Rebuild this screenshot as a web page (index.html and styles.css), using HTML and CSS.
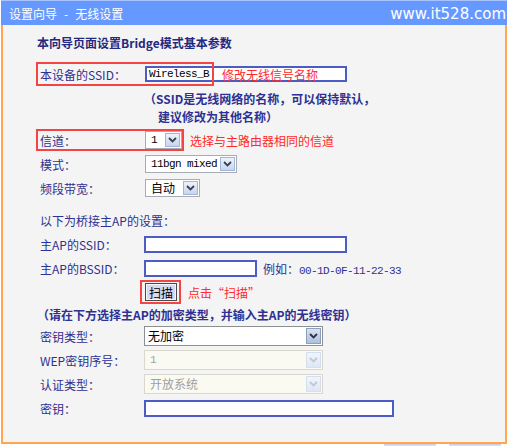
FILE: index.html
```html
<!DOCTYPE html>
<html lang="zh-CN">
<head>
    <meta charset="UTF-8">
    <title>设置向导 - 无线设置</title>
    <link rel="stylesheet" href="styles.css">
</head>
<body>
    <div class="page">
        <div class="titlebar">
            <span class="title">设置向导<span class="dash">-</span>无线设置</span>
            <span class="site">www.it528.com</span>
        </div>

        <div class="panel">
            <p class="intro">本向导页面设置Bridge模式基本参数</p>

            <div class="row">
                <span class="mark mark-ssid"></span>
                <span class="lbl">本设备的SSID：</span>
                <div class="input input-ssid">
                    <span class="mono">Wireless_B</span>
                    <span class="tip tip-ssid">修改无线信号名称</span>
                </div>
            </div>

            <div class="note">
                <div class="note-line">（SSID是无线网络的名称，可以保持默认，</div>
                <div class="note-line note-indent">建议修改为其他名称）</div>
            </div>

            <div class="row">
                <span class="mark mark-chan"></span>
                <span class="lbl">信道：</span>
                <div class="sel sel-chan">
                    <span class="val mono">1</span>
                    <span class="arr"><svg width="9" height="6" viewBox="0 0 9 6"><path d="M1 1L4.5 4.5L8 1" fill="none" stroke="#3b4150" stroke-width="1.8"/></svg></span>
                </div>
                <span class="tip tip-chan">选择与主路由器相同的信道</span>
            </div>

            <div class="row">
                <span class="lbl">模式：</span>
                <div class="sel sel-mode">
                    <span class="val mono">11bgn mixed</span>
                    <span class="arr"><svg width="9" height="6" viewBox="0 0 9 6"><path d="M1 1L4.5 4.5L8 1" fill="none" stroke="#3b4150" stroke-width="1.8"/></svg></span>
                </div>
            </div>

            <div class="row">
                <span class="lbl">频段带宽：</span>
                <div class="sel sel-band">
                    <span class="val">自动</span>
                    <span class="arr"><svg width="9" height="6" viewBox="0 0 9 6"><path d="M1 1L4.5 4.5L8 1" fill="none" stroke="#3b4150" stroke-width="1.8"/></svg></span>
                </div>
            </div>

            <div class="row row-gap">
                <span class="lbl lbl-wide">以下为桥接主AP的设置：</span>
            </div>

            <div class="row">
                <span class="lbl">主AP的SSID：</span>
                <div class="input input-apssid"></div>
            </div>

            <div class="row">
                <span class="lbl">主AP的BSSID：</span>
                <div class="input input-bssid"></div>
                <span class="example">例如：<span class="mono mono-navy">00-1D-0F-11-22-33</span></span>
            </div>

            <div class="row">
                <span class="mark mark-scan"></span>
                <span class="lbl"></span>
                <button class="scan">扫描</button>
                <span class="tip tip-scan">点击“扫描”</span>
            </div>

            <div class="row row-note">
                <span class="enc-note">（请在下方选择主AP的加密类型，并输入主AP的无线密钥）</span>
            </div>

            <div class="row">
                <span class="lbl">密钥类型：</span>
                <div class="sel sel-key">
                    <span class="val">无加密</span>
                    <span class="arr arr-dark"><svg width="9" height="6" viewBox="0 0 9 6"><path d="M1 1L4.5 4.5L8 1" fill="none" stroke="#2c3240" stroke-width="1.8"/></svg></span>
                </div>
            </div>

            <div class="row">
                <span class="lbl">WEP密钥序号：</span>
                <div class="sel sel-key sel-off">
                    <span class="val mono">1</span>
                    <span class="arr"><svg width="9" height="6" viewBox="0 0 9 6"><path d="M1 1L4.5 4.5L8 1" fill="none" stroke="#c4c8ce" stroke-width="1.8"/></svg></span>
                </div>
            </div>

            <div class="row">
                <span class="lbl">认证类型：</span>
                <div class="sel sel-key sel-off">
                    <span class="val">开放系统</span>
                    <span class="arr"><svg width="9" height="6" viewBox="0 0 9 6"><path d="M1 1L4.5 4.5L8 1" fill="none" stroke="#c4c8ce" stroke-width="1.8"/></svg></span>
                </div>
            </div>

            <div class="row">
                <span class="lbl">密钥：</span>
                <div class="input input-key"></div>
            </div>
        </div>

        <div class="footer">
            <span class="fbtn"></span>
            <span class="fbtn"></span>
        </div>
    </div>
</body>
</html>
```

FILE: styles.css
```css
body {
    margin: 0;
    background-color: #fff;
    font-family: "Noto Sans CJK SC", sans-serif;
    font-size: 12px;
    color: #2e3192;
}

.page {
    width: 506px;
    margin-left: 1px;
}

.titlebar {
    height: 25px;
    box-sizing: border-box;
    background-color: #6699ff;
    border-top: 1px solid #a9c3ff;
    display: flex;
    justify-content: space-between;
    align-items: center;
    padding: 0 1px 0 8px;
    color: #fff;
}

.title {
    font-size: 12px;
}

.dash {
    margin: 0 7px 0 7px;
}

.site {
    font-family: "DejaVu Sans", sans-serif;
    font-size: 15px;
    margin-top: 1px;
}

.panel {
    background-color: #f4f4f4;
    border: 2px solid #ffa64f;
    border-top: 0;
    padding: 9px 0 22px 37px;
}

.intro {
    margin: 0 0 10px -3px;
    height: 18px;
    line-height: 18px;
    font-size: 12px;
    font-weight: bold;
    color: #26287f;
}

.row {
    position: relative;
    display: flex;
    align-items: center;
    height: 24px;
}

.row-gap {
    margin-top: 8px;
}

.row-note {
    height: 20px;
}

.lbl {
    width: 104px;
    flex: none;
}

.lbl-wide {
    width: auto;
}

.mono {
    font-family: "Liberation Mono", monospace;
    font-size: 11px;
    letter-spacing: -0.6px;
    color: #000;
}

.mono-navy {
    color: #2e3192;
}

/* red annotation frames */
.mark {
    position: absolute;
    box-sizing: border-box;
    border: 2px solid #f44444;
}

.mark-ssid {
    left: -4px;
    top: 0;
    width: 178px;
    height: 24px;
}

.mark-chan {
    left: -4px;
    top: 1px;
    width: 148px;
    height: 22px;
}

.mark-scan {
    left: 100px;
    top: 0;
    width: 41px;
    height: 24px;
}

.tip {
    color: #ff2a2a;
    white-space: nowrap;
}

.tip-ssid {
    margin-left: 13px;
}

.tip-chan {
    margin-left: 8px;
}

.tip-scan {
    margin-left: 11px;
}

.input {
    box-sizing: border-box;
    height: 17px;
    border: 2px solid #4b5cc4;
    background-color: #fff;
}

.input-ssid {
    width: 202px;
    height: 16px;
    margin-left: 1px;
    display: flex;
    align-items: center;
    padding-left: 2px;
}

.input-apssid {
    width: 203px;
}

.input-bssid {
    width: 113px;
}

.input-key {
    width: 250px;
}

.example {
    margin-left: 6px;
    white-space: nowrap;
}

.note {
    margin: 4px 0 2px 104px;
    font-weight: bold;
}

.note-line {
    height: 18px;
    line-height: 18px;
}

.note-indent {
    padding-left: 14px;
}

.enc-note {
    margin-left: -3px;
    font-weight: bold;
    white-space: nowrap;
}

/* drop-down boxes */
.sel {
    box-sizing: border-box;
    display: flex;
    height: 18px;
    margin-left: 1px;
    border: 1px solid #a7adb6;
    background-color: #fff;
    color: #000;
}

.sel .val {
    flex: 1;
    padding-left: 5px;
    line-height: 16px;
    white-space: nowrap;
}

.arr {
    box-sizing: border-box;
    width: 15px;
    margin: 1px;
    display: flex;
    align-items: center;
    justify-content: center;
    border: 1px solid #a3b6d8;
    background: linear-gradient(#eef3fc, #c6d5ee);
}

.arr-dark {
    border-color: #8ea0bd;
    background: linear-gradient(#d8e2f2, #aebfdb);
}

.sel-chan {
    width: 37px;
}

.sel-mode {
    width: 92px;
}

.sel-band {
    width: 55px;
}

.sel-key {
    width: 179px;
    height: 20px;
    margin-left: 0;
    border-color: #8c8f94;
}

.sel-key .val {
    line-height: 18px;
    padding-left: 3px;
}

.sel-off {
    border-color: #d9d8cf;
    background-color: #fafaf3;
    color: #a0a0a0;
}

.sel-off .val {
    padding-left: 5px;
}

.sel-off .mono {
    color: #a0a0a0;
}

.sel-off .arr {
    border-color: #d4e0f0;
    background: linear-gradient(#f0f5fc, #dde7f6);
}

.scan {
    box-sizing: border-box;
    width: 32px;
    height: 18px;
    margin: 0 0 0 1px;
    padding: 0;
    border: 1px solid #4a4a4a;
    box-shadow: inset 0 0 0 1px #f4f4fb;
    background-color: #d8d8f0;
    font-family: "Noto Sans CJK SC", sans-serif;
    font-size: 12px;
    color: #000;
}

.footer {
    display: flex;
    justify-content: flex-end;
    gap: 13px;
    padding-right: 6px;
    height: 2px;
    overflow: hidden;
}

.fbtn {
    flex: none;
    width: 52px;
    height: 22px;
    background-color: #dcdcf0;
    border-top: 1px solid #cfd0e6;
}
```
